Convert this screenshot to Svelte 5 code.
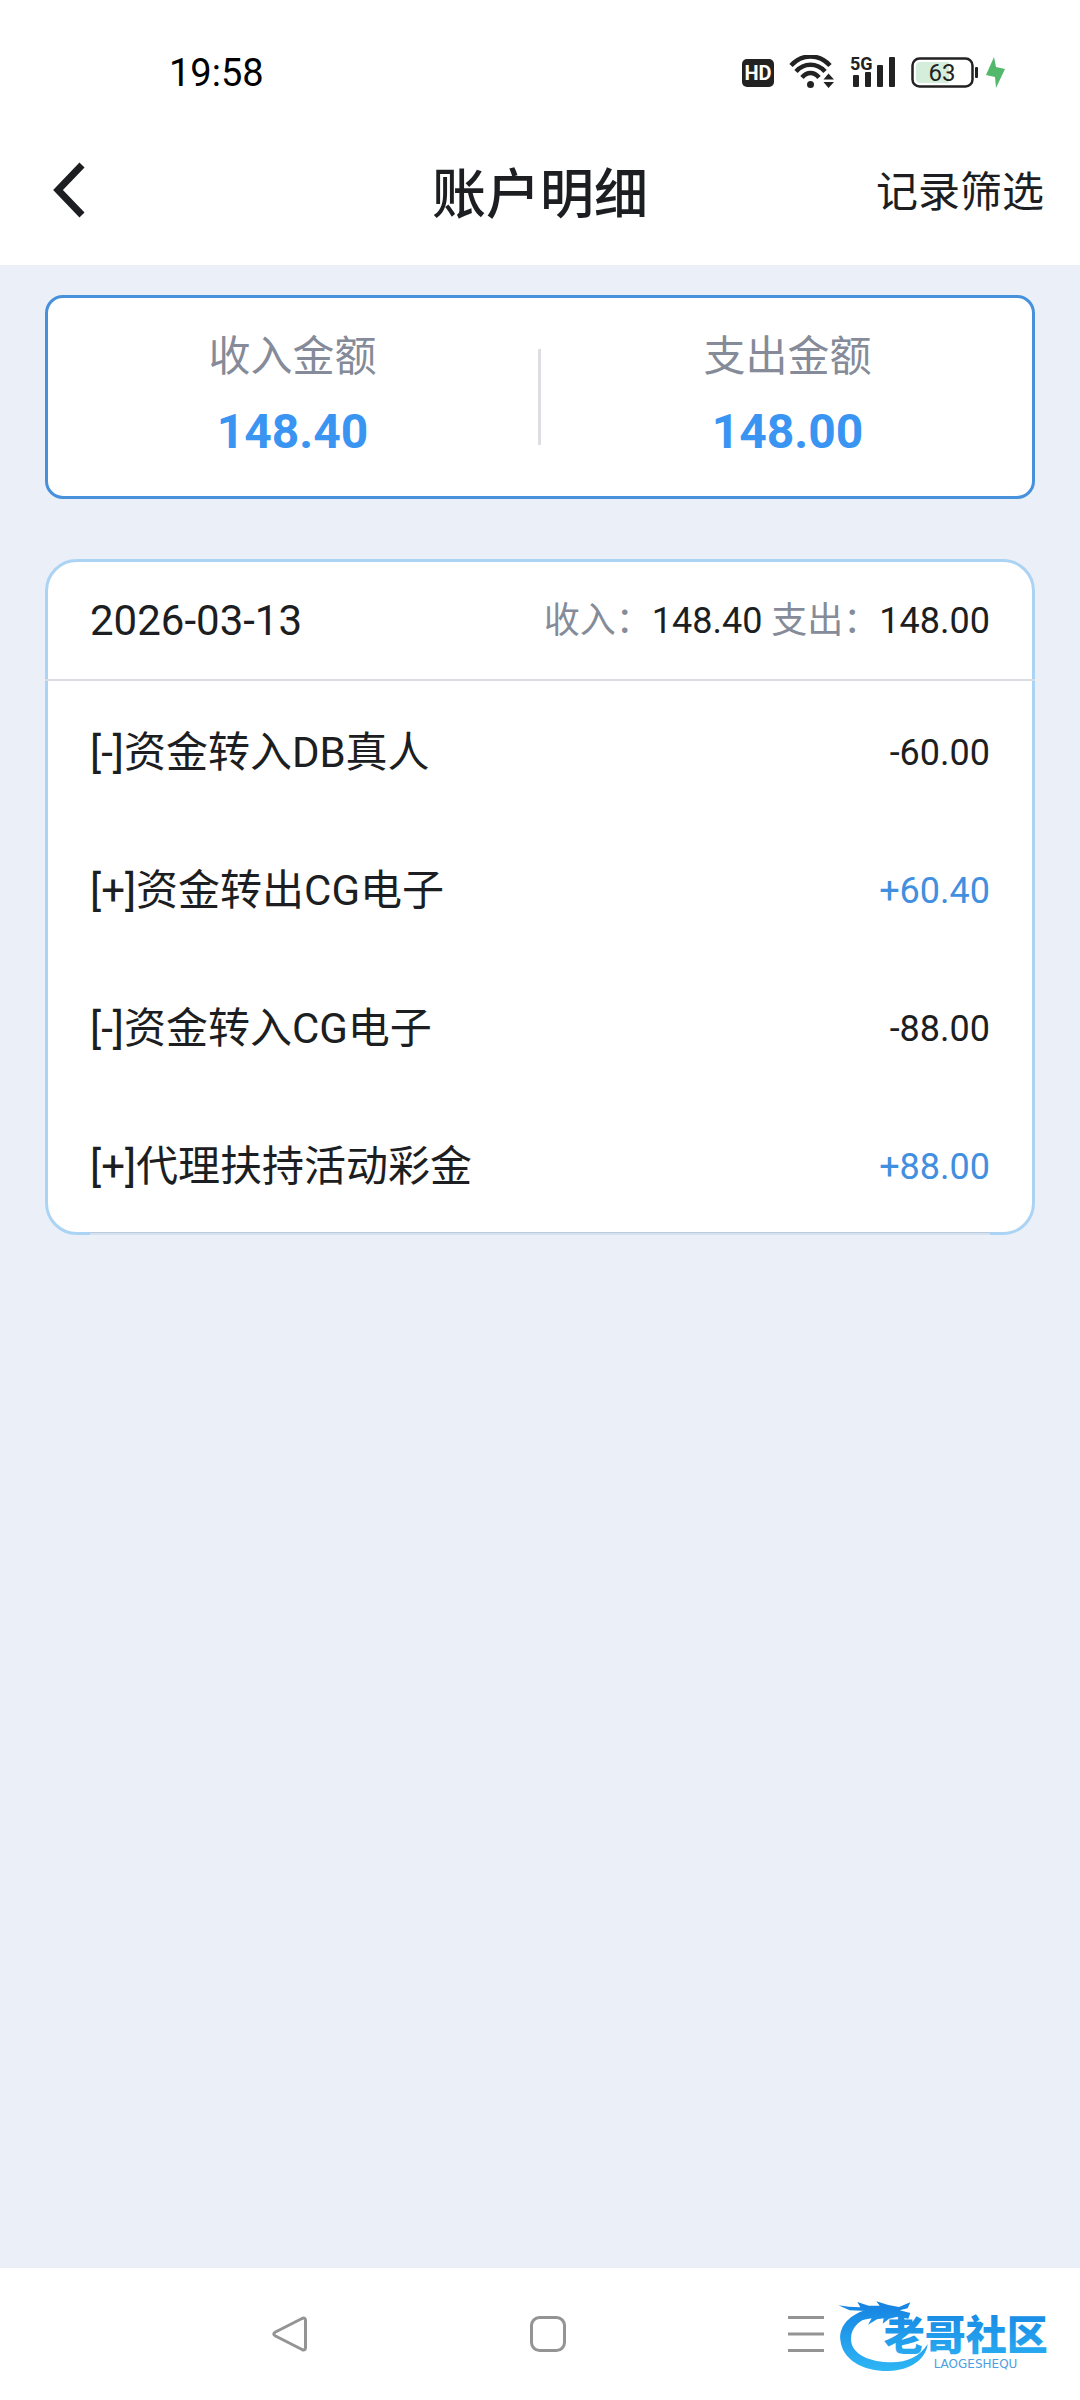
<script lang="ts">
	type Entry = { title: string; amount: string };

	const totals = [
		{ label: '收入金额', value: '148.40' },
		{ label: '支出金额', value: '148.00' },
	];

	const day = {
		date: '2026-03-13',
		income: '148.40',
		expense: '148.00',
	};

	const entries: Entry[] = [
		{ title: '[-]资金转入DB真人', amount: '-60.00' },
		{ title: '[+]资金转出CG电子', amount: '+60.40' },
		{ title: '[-]资金转入CG电子', amount: '-88.00' },
		{ title: '[+]代理扶持活动彩金', amount: '+88.00' },
	];
</script>

<div class="page">
	<div class="status">
		<span class="time">19:58</span>
		<div class="status-icons">
			<svg width="32" height="36" viewBox="0 0 32 36">
				<rect y="4" width="32" height="28" rx="5" fill="#222" />
				<text x="16" y="25" class="hd">HD</text>
			</svg>
			<svg width="46" height="36" viewBox="0 0 46 36">
				<g fill="none" stroke="#222" stroke-width="4.500">
					<path d="M2 10.500C13 -1.500 30 -1.500 41 10.500" />
					<path d="M7 16.500C15 7.500 28 7.500 36 16.500" />
					<path d="M13 22.500C18 16.500 25 16.500 30 22.500" />
				</g>
				<circle cx="21.500" cy="29.500" r="3.500" fill="#222" />
				<path d="M34.500 24.500 39.500 18.500 45 24.500ZM34.500 27 39.500 33 45 27Z" fill="#222" />
			</svg>
			<svg class="signal" width="46" height="36" viewBox="0 0 46 36" fill="#222">
				<text x="0" y="15" class="net">5G</text>
				<rect x="3" y="20" width="6" height="12" rx="1" />
				<rect x="15" y="17" width="6" height="15" rx="1" />
				<rect x="27" y="10" width="6" height="22" rx="1" />
				<rect x="39" y="2" width="6" height="30" rx="1" />
			</svg>
			<svg width="95" height="36" viewBox="0 0 95 36">
				<rect x="1.500" y="3.500" width="60" height="28" rx="7" fill="#fff" stroke="#222" stroke-width="2.500" />
				<path d="M9 7H38V28H9Q5 28 5 24V11Q5 7 9 7Z" fill="#d5eddb" />
				<rect x="64" y="12" width="3" height="11" rx="1" fill="#222" />
				<text x="31" y="26" class="level">63</text>
				<path d="M83 2 75 20 84 22 85 33 94 14 85 12Z" fill="#52b96c" />
			</svg>
		</div>
	</div>

	<header class="header">
		<button class="back" aria-label="返回">
			<svg width="32" height="56" viewBox="0 0 32 56">
				<path d="M29 3 5 28 29 53" fill="none" stroke="#1c1e22" stroke-width="7" />
			</svg>
		</button>
		<h1>账户明细</h1>
		<button class="filter">记录筛选</button>
	</header>

	<main>
		<section class="totals">
			{#each totals as total}
				<div class="total">
					<span class="total-label">{total.label}</span>
					<strong>{total.value}</strong>
				</div>
			{/each}
		</section>

		<section class="day">
			<div class="day-head">
				<span class="date">{day.date}</span>
				<p class="day-sum">
					<span>收入：</span>{day.income} <span>支出：</span>{day.expense}
				</p>
			</div>
			<ul>
				{#each entries as entry}
					<li>
						<span class="entry-title">{entry.title}</span>
						<span class="amount" class:plus={entry.amount.startsWith('+')}>{entry.amount}</span>
					</li>
				{/each}
			</ul>
		</section>
	</main>

	<nav class="system-nav">
		<button aria-label="后退">
			<svg width="36" height="36" viewBox="0 0 36 36">
				<path d="M30 2.500 3.500 16Q0 18 3.500 20L30 33.500Q33.500 35 33.500 31.500V4.500Q33.500 1 30 2.500Z" />
			</svg>
		</button>
		<button aria-label="主页">
			<svg width="36" height="36" viewBox="0 0 36 36">
				<rect x="1.500" y="1.500" width="33" height="33" rx="8" />
			</svg>
		</button>
		<button aria-label="菜单">
			<svg width="36" height="36" viewBox="0 0 36 36">
				<path d="M0 1.500H36M0 18H36M0 34.500H36" />
			</svg>
		</button>

		<svg class="watermark" width="228" height="80" viewBox="50 40 684 240">
			<defs>
				<linearGradient id="brand" gradientUnits="userSpaceOnUse" x1="0" y1="70" x2="0" y2="270">
					<stop offset="0" stop-color="#1683e2" />
					<stop offset="1" stop-color="#2db5f4" />
				</linearGradient>
			</defs>
			<g fill="url(#brand)">
				<path d="M165 84C96 94 55 135 60 180C66 242 130 275 205 274C270 272 316 240 322 193C300 230 260 248 215 248C150 248 92 225 92 178C92 140 120 118 165 106Z" />
				<path d="M54 77 85 81 120 83 111 67 145 78 178 78 168 65 204 76 236 82 270 68 262 86 238 92 270 100 264 117 232 111 206 117 187 132 190 116 170 119 143 135 154 116 125 121 101 133 121 107 139 94 88 92Z" />
				<text x="190" y="212" class="brand-name">老哥社区</text>
			</g>
			<text x="340" y="264" class="brand-latin">LAOGESHEQU</text>
		</svg>
	</nav>
</div>

<style>
	:global(body) {
		margin: 0;
	}

	.page {
		min-height: 100vh;
		display: flex;
		flex-direction: column;
		background: #eaeff8;
		color: #1c1e22;
		font-family: Roboto, 'Noto Sans CJK SC', sans-serif;
	}

	button {
		padding: 0;
		border: 0;
		background: none;
		color: inherit;
		font-family: inherit;
		cursor: pointer;
	}

	svg {
		display: block;
	}

	.status {
		height: 120px;
		box-sizing: border-box;
		padding: 26px 74px 0 169px;
		display: flex;
		align-items: center;
		justify-content: space-between;
		background: #fff;
	}

	.time {
		color: #000;
		font-size: 38px;
		line-height: 48px;
	}

	.status-icons {
		display: flex;
		gap: 15px;
	}

	.signal {
		overflow: visible;
	}

	.hd {
		fill: #fff;
		font-size: 20px;
		font-weight: 700;
		text-anchor: middle;
	}

	.net {
		font-size: 18px;
		font-weight: 700;
	}

	.level {
		fill: #222;
		font-size: 24px;
		text-anchor: middle;
	}

	.header {
		height: 145px;
		box-sizing: border-box;
		padding: 0 36px 0 53px;
		display: grid;
		grid-template-columns: 1fr auto 1fr;
		align-items: center;
		background: #fff;
	}

	.back {
		justify-self: start;
		padding-bottom: 6px;
	}

	h1 {
		margin: 0;
		padding: 6px 17px 0 0;
		font-size: 54px;
		font-weight: 500;
		line-height: 60px;
	}

	.filter {
		justify-self: end;
		font-size: 42px;
		line-height: 60px;
	}

	main {
		flex: 1;
		padding: 30px 45px;
		display: flex;
		flex-direction: column;
		gap: 60px;
	}

	.totals {
		display: flex;
		padding: 29px 0 28px;
		border: 3px solid #4790dc;
		border-radius: 18px;
		background: #fff;
	}

	.total {
		flex: 1;
		position: relative;
		display: flex;
		flex-direction: column;
		align-items: center;
		gap: 9px;
	}

	.total:first-child {
		margin-left: -3px;
	}

	.total:last-child {
		margin-right: -3px;
	}

	.total + .total::before {
		content: '';
		position: absolute;
		left: -2px;
		top: 22px;
		bottom: 23px;
		width: 3px;
		background: #dcdee2;
	}

	.total-label {
		color: #858b98;
		font-size: 42px;
		line-height: 60px;
	}

	strong {
		color: #3a94f2;
		font-size: 48px;
		font-weight: 700;
		line-height: 72px;
	}

	.day {
		position: relative;
		border: 3px solid #abd3f3;
		border-radius: 32px;
		background: #fff;
	}

	/* the last row's hairline softens the bottom border between the corners */
	.day::after {
		content: '';
		position: absolute;
		left: 42px;
		right: 42px;
		bottom: -3px;
		height: 2px;
		border-top: 1px solid #b9cbdc;
		background: #d3e1f1;
	}

	.day-head {
		margin: 0 -3px;
		padding: 0 45px;
		height: 117px;
		display: flex;
		align-items: center;
		justify-content: space-between;
		border-bottom: 2px solid #d9dce0;
	}

	.date {
		font-size: 42px;
		line-height: 60px;
	}

	.day-sum {
		margin: 0;
		font-size: 36px;
		line-height: 60px;
	}

	.day-sum span {
		color: #858b98;
	}

	ul {
		margin: 0 0 -1px;
		padding: 0 42px;
		list-style: none;
	}

	li {
		height: 138px;
		box-sizing: border-box;
		padding-top: 5px;
		display: flex;
		align-items: center;
		justify-content: space-between;
	}

	.entry-title {
		font-size: 42px;
		line-height: 60px;
	}

	.amount {
		font-size: 36px;
		line-height: 60px;
	}

	.plus {
		color: #428fe0;
	}

	.system-nav {
		position: relative;
		height: 132px;
		padding-left: 16px;
		display: flex;
		align-items: center;
		justify-content: center;
		gap: 222px;
		background: #fff;
	}

	.system-nav button svg {
		fill: none;
		stroke: #949494;
		stroke-width: 3;
	}

	.watermark {
		position: absolute;
		right: 15px;
		bottom: 27px;
	}

	.brand-name {
		font-family: 'Noto Sans CJK SC', sans-serif;
		font-size: 123px;
		font-weight: 900;
	}

	.brand-latin {
		fill: #4c9fe0;
		font-family: 'DejaVu Sans', sans-serif;
		font-size: 36px;
	}
</style>
